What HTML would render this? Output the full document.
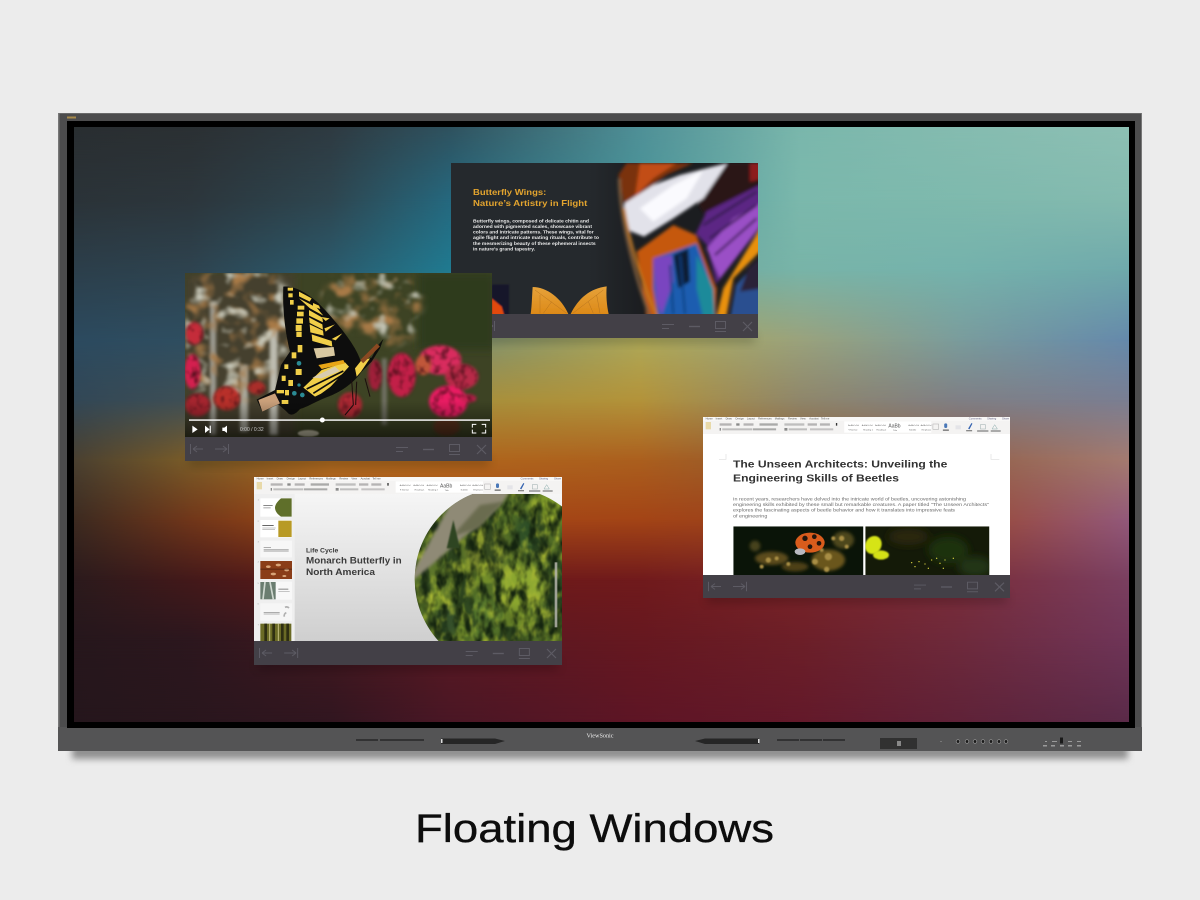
<!DOCTYPE html>
<html lang="en"><head><meta charset="utf-8"><title>Floating Windows</title>
<style>
html,body{margin:0;padding:0;background:#ececec;width:1200px;height:900px;overflow:hidden;position:relative}
svg.l{display:block;position:absolute;left:0;top:0}
text{font-family:"Liberation Sans",sans-serif}
.w{position:absolute;left:74px;top:127px;width:1055px;height:595px}
</style></head>
<body>
<svg class="l" xmlns="http://www.w3.org/2000/svg" width="1200" height="900" viewBox="0 0 1200 900">
<defs>
<filter id="sh0" x="-5%" y="-200%" width="110%" height="500%"><feGaussianBlur stdDeviation="3.500"/></filter>
</defs>
<rect width="1200" height="900" fill="#ececec"/>
<rect x="72" y="745" width="1056" height="14" fill="#8f8f8f" filter="url(#sh0)"/>
<rect x="58" y="113" width="1084" height="638" fill="#4c4c4d"/>
<rect x="58" y="113" width="1084" height="1" fill="#6a6a6a"/>
<rect x="58" y="113" width="1.500" height="638" fill="#777"/>
<rect x="1141" y="113" width="1" height="638" fill="#777"/>
<rect x="58" y="727" width="1084" height="24" fill="#545455"/>
<rect x="67" y="121" width="1068" height="607" fill="#000"/>
<rect x="67" y="116.500" width="9" height="2" fill="#a78a4a"/>
<path d="M356 740h22M380 740h22M402 740h22M777 740h22M800 740h22M823 740h22" stroke="#111" stroke-width="1"/>
<path d="M441 738.500h54l10 2.500-10 3h-54z" fill="#262626"/><rect x="441" y="739" width="1.500" height="4" fill="#ddd"/>
<path d="M759 738.500h-54l-10 2.500 10 3h54z" fill="#262626"/><rect x="758" y="739" width="1.500" height="4" fill="#ddd"/>
<text x="600" y="737.500" text-anchor="middle" font-size="6.500" fill="#eee" style="font-family:'Liberation Serif',serif" textLength="27" lengthAdjust="spacingAndGlyphs">ViewSonic</text>
<rect x="880" y="738" width="37" height="11" fill="#313131"/><rect x="897" y="741" width="4" height="5" fill="#888"/>
<g fill="#1a1a1a" stroke="#9a9a9a" stroke-width=".7"><circle cx="958" cy="741.500" r="1.800"/><circle cx="967" cy="741.500" r="1.800"/><circle cx="975" cy="741.500" r="1.800"/><circle cx="983" cy="741.500" r="1.800"/><circle cx="991" cy="741.500" r="1.800"/><circle cx="999" cy="741.500" r="1.800"/><circle cx="1006" cy="741.500" r="1.800"/></g>
<rect x="940" y="741" width="2" height="1" fill="#777"/>
<rect x="1060" y="737.500" width="3" height="6" fill="#1a1a1a"/>
<g fill="#9a9a9a"><rect x="1043" y="745" width="4" height="1.500"/><rect x="1051" y="745" width="4" height="1.500"/><rect x="1060" y="745" width="4" height="1.500"/><rect x="1068" y="745" width="4" height="1.500"/><rect x="1077" y="745" width="4" height="1.500"/><rect x="1068" y="741" width="4" height="1"/><rect x="1077" y="741" width="4" height="1"/><rect x="1045" y="741" width="2" height="1"/><rect x="1052" y="741" width="5" height="1"/></g>
<text x="415" y="842" font-size="40" fill="#0d0d0d" stroke="#0d0d0d" stroke-width=".35" textLength="359" lengthAdjust="spacingAndGlyphs">Floating Windows</text>
</svg>

<!-- wallpaper: bilinear colour grid -->
<div class="w" style="background:linear-gradient(to right,#292e31 0,#2b3033 116px,#2e3a41 256px,#2f525f 376px,#4f9097 566px,#7ab7ac 726px,#85bcb0 886px,#8dc0b4 1055px)"></div>
<div class="w" style="background:linear-gradient(to right,#2b3338 0,#2c363c 116px,#2e4650 256px,#25687e 376px,#4a9599 566px,#7bb8ac 726px,#7eb9ad 886px,#84baaf 1055px);-webkit-mask-image:linear-gradient(to bottom,transparent 0,#000 73px);mask-image:linear-gradient(to bottom,transparent 0,#000 73px)"></div>
<div class="w" style="background:linear-gradient(to right,#2c3f4b 0,#2e434f 116px,#2b5a6c 256px,#207a90 376px,#6aa39a 566px,#78b4a8 726px,#75b2ac 886px,#6fa9ab 1055px);-webkit-mask-image:linear-gradient(to bottom,transparent 73px,#000 143px);mask-image:linear-gradient(to bottom,transparent 73px,#000 143px)"></div>
<div class="w" style="background:linear-gradient(to right,#2c4a5f 0,#2f4e60 116px,#34607a 256px,#7a8d70 376px,#aea858 566px,#9aa27c 726px,#7a9c9c 886px,#6589ab 1055px);-webkit-mask-image:linear-gradient(to bottom,transparent 143px,#000 213px);mask-image:linear-gradient(to bottom,transparent 143px,#000 213px)"></div>
<div class="w" style="background:linear-gradient(to right,#324756 0,#3f4f55 116px,#6e6b40 256px,#a58f3c 376px,#b3933a 566px,#8f866a 726px,#7f7f85 886px,#7a7e92 1055px);-webkit-mask-image:linear-gradient(to bottom,transparent 213px,#000 273px);mask-image:linear-gradient(to bottom,transparent 213px,#000 273px)"></div>
<div class="w" style="background:linear-gradient(to right,#4a4030 0,#7a5c28 116px,#ae6c20 256px,#b0661c 376px,#ab5f1e 566px,#8f5a32 726px,#92604a 886px,#a47a70 1055px);-webkit-mask-image:linear-gradient(to bottom,transparent 273px,#000 333px);mask-image:linear-gradient(to bottom,transparent 273px,#000 333px)"></div>
<div class="w" style="background:linear-gradient(to right,#3c2a20 0,#70361a 116px,#a14a16 256px,#a54716 376px,#a34416 566px,#99421f 726px,#9b4a34 886px,#92587a 1055px);-webkit-mask-image:linear-gradient(to bottom,transparent 333px,#000 393px);mask-image:linear-gradient(to bottom,transparent 333px,#000 393px)"></div>
<div class="w" style="background:linear-gradient(to right,#2b1a1c 0,#43191a 116px,#611a18 256px,#6c1a18 376px,#701a1c 566px,#7a2428 726px,#7a2d3a 886px,#7a3f60 1055px);-webkit-mask-image:linear-gradient(to bottom,transparent 393px,#000 453px);mask-image:linear-gradient(to bottom,transparent 393px,#000 453px)"></div>
<div class="w" style="background:linear-gradient(to right,#26171c 0,#2c171e 116px,#41181f 256px,#581822 376px,#661820 566px,#6c1f28 726px,#6e2a3c 886px,#6f3558 1055px);-webkit-mask-image:linear-gradient(to bottom,transparent 453px,#000 513px);mask-image:linear-gradient(to bottom,transparent 453px,#000 513px)"></div>
<div class="w" style="background:linear-gradient(to right,#25161c 0,#29161d 116px,#311620 256px,#4a1725 376px,#5e1525 566px,#63192a 726px,#5f2238 886px,#5a2a48 1055px);-webkit-mask-image:linear-gradient(to bottom,transparent 513px,#000 595px);mask-image:linear-gradient(to bottom,transparent 513px,#000 595px)"></div>

<svg class="l" xmlns="http://www.w3.org/2000/svg" width="1200" height="900" viewBox="0 0 1200 900">
<defs>
<filter id="soft" x="-2%" y="-2%" width="104%" height="104%"><feGaussianBlur stdDeviation="1.100"/></filter>
<filter id="b1" x="-20%" y="-20%" width="140%" height="140%"><feGaussianBlur stdDeviation="2.500"/></filter>
<filter id="bw" x="-5%" y="-5%" width="110%" height="110%"><feGaussianBlur stdDeviation="5"/></filter>
<filter id="b2" x="-30%" y="-30%" width="160%" height="160%"><feGaussianBlur stdDeviation="5"/></filter>
<filter id="b3" x="-40%" y="-40%" width="180%" height="180%"><feGaussianBlur stdDeviation="12"/></filter>
<filter id="sh" x="-10%" y="-100%" width="120%" height="300%"><feGaussianBlur stdDeviation="5"/></filter>
<filter id="tex" x="-5%" y="-5%" width="110%" height="110%" color-interpolation-filters="sRGB">
 <feGaussianBlur in="SourceGraphic" stdDeviation="5" result="s"/>
 <feTurbulence type="fractalNoise" baseFrequency="0.04 0.035" numOctaves="2" seed="9"/>
 <feColorMatrix values="0 0 0 0 .25  0 0 0 0 .05  0 0 0 0 .08  2 0 0 0 -.9"/>
 <feGaussianBlur stdDeviation="2"/>
 <feComposite in2="s" operator="in" result="n"/>
 <feMerge><feMergeNode in="s"/><feMergeNode in="n"/></feMerge>
</filter>
<filter id="texL" x="-5%" y="-5%" width="110%" height="110%" color-interpolation-filters="sRGB">
 <feGaussianBlur in="SourceGraphic" stdDeviation="2" result="s"/>
 <feTurbulence type="fractalNoise" baseFrequency="0.035 0.022" numOctaves="3" seed="21"/>
 <feColorMatrix values="0 0 0 0 .66  0 0 0 0 .72  0 0 0 0 .2  2.500 0 0 0 -1.15"/>
 <feGaussianBlur stdDeviation="2"/>
 <feComposite in2="s" operator="in" result="n"/>
 <feTurbulence type="fractalNoise" baseFrequency="0.04 0.02" numOctaves="3" seed="5"/>
 <feColorMatrix values="0 0 0 0 .08  0 0 0 0 .14  0 0 0 0 .06  3 0 0 0 -1.25"/>
 <feGaussianBlur stdDeviation="2"/>
 <feComposite in2="s" operator="in" result="d"/>
 <feMerge><feMergeNode in="s"/><feMergeNode in="n"/><feMergeNode in="d"/></feMerge>
</filter>
<filter id="nBrown" x="0" y="0" width="100%" height="100%" color-interpolation-filters="sRGB">
 <feTurbulence type="fractalNoise" baseFrequency="0.018 0.02" numOctaves="2" seed="14"/>
 <feColorMatrix values="0 0 0 0 .66  0 0 0 0 .48  0 0 0 0 .28  4 0 0 0 -1.9"/>
 <feGaussianBlur stdDeviation="4"/>
</filter>
<filter id="nWhite" x="0" y="0" width="100%" height="100%" color-interpolation-filters="sRGB">
 <feTurbulence type="fractalNoise" baseFrequency="0.02 0.024" numOctaves="2" seed="33"/>
 <feColorMatrix values="0 0 0 0 .78  0 0 0 0 .78  0 0 0 0 .72  4 0 0 0 -2.15"/>
 <feGaussianBlur stdDeviation="4"/>
</filter>
<mask id="mBush" maskUnits="userSpaceOnUse" x="0" y="0" width="990" height="615">
 <g fill="#fff" filter="url(#b3)"><ellipse cx="190" cy="170" rx="175" ry="175"/><ellipse cx="160" cy="340" rx="110" ry="70"/><ellipse cx="590" cy="110" rx="150" ry="100"/><ellipse cx="650" cy="190" rx="70" ry="50"/></g>
</mask>
<linearGradient id="slide" x1="0" y1="0" x2="0" y2="1"><stop offset="0" stop-color="#fafafa"/><stop offset="1" stop-color="#cfcfcf"/></linearGradient>
<linearGradient id="vid" x1="0" y1="0" x2="0" y2="1"><stop offset="0.78" stop-color="#000" stop-opacity="0"/><stop offset="1" stop-color="#000" stop-opacity=".55"/></linearGradient>
<linearGradient id="dk" x1="0" y1="0" x2="1" y2="0"><stop offset="0" stop-color="#25292d"/><stop offset=".45" stop-color="#25292d"/><stop offset=".62" stop-color="#1b1d20"/></linearGradient>
<linearGradient id="leaf" x1="0" y1="0" x2="0" y2="1"><stop offset="0" stop-color="#e6a23a"/><stop offset="1" stop-color="#dd8a18"/></linearGradient>
<clipPath id="circ"><circle cx="784" cy="328" r="275"/></clipPath>

<symbol id="bar" viewBox="0 0 307 24" preserveAspectRatio="none">
<rect width="307" height="24" fill="#434047"/>
<g fill="none" stroke="#5d5b64" stroke-width="1">
<path d="M5.500 7v10M8 12h10M8 12l4-3M8 12l4 3"/>
<path d="M30 12h12M42 12l-4-3M42 12l-4 3M43.500 7v10"/>
<path d="M211 10.500h12M211 14.500h7"/>
<path d="M238 12.500h11" stroke-width="1.400"/>
<path d="M264.500 7.500h10v7h-10zM264 17.500h11"/>
<path d="M292 8l9 9M301 8l-9 9" stroke-width="1.200"/>
</g></symbol>

<symbol id="ribbon" viewBox="0 0 924 52" preserveAspectRatio="none">
<rect width="924" height="52" fill="#f4f3f2"/>
<rect y="0" width="924" height="13" fill="#f8f7f6"/>
<g font-size="8" fill="#555">
<text x="8" y="9">Home</text><text x="38" y="9">Insert</text><text x="68" y="9">Draw</text><text x="98" y="9">Design</text><text x="132" y="9">Layout</text><text x="166" y="9">References</text><text x="216" y="9">Mailings</text><text x="256" y="9">Review</text><text x="292" y="9">View</text><text x="320" y="9">Acrobat</text><text x="355" y="9">Tell me</text>
<text x="800" y="9" fill="#668">Comments</text><text x="855" y="9" fill="#668">Sharing</text><text x="900" y="9" fill="#668">Share</text>
</g>
<rect x="8" y="16" width="16" height="22" fill="#e8d9a8"/>
<g fill="#8a8a8a">
<rect x="50" y="20" width="36" height="7" opacity=".6"/><rect x="100" y="20" width="10" height="7"/><rect x="122" y="20" width="30" height="7" opacity=".6"/><rect x="170" y="20" width="55" height="7" opacity=".7"/><rect x="245" y="20" width="60" height="7" opacity=".5"/><rect x="315" y="20" width="28" height="7" opacity=".6"/><rect x="352" y="20" width="30" height="7" opacity=".6"/><rect x="400" y="19" width="4" height="8" fill="#333"/>
<rect x="50" y="34" width="4" height="8"/><rect x="58" y="35" width="90" height="6" opacity=".5"/><rect x="150" y="35" width="70" height="6" opacity=".7"/><rect x="245" y="34" width="9" height="8"/><rect x="258" y="35" width="55" height="6" opacity=".5"/><rect x="322" y="35" width="70" height="6" opacity=".45"/>
</g>
<rect x="425" y="14" width="262" height="34" fill="#fff"/>
<g font-size="6.500" fill="#666"><text x="437" y="28">AaBbCcDd</text><text x="478" y="28">AaBbCcDd</text><text x="518" y="28">AaBbCcDd</text><text x="618" y="28">AaBbCcDd</text><text x="655" y="28">AaBbCcDd</text>
<text x="438" y="42">¶ Normal</text><text x="482" y="42">Heading 1</text><text x="522" y="42">Heading 2</text><text x="620" y="42">Subtitle</text><text x="658" y="42">Emphasis</text></g>
<text x="558" y="33" font-size="15" fill="#555">AaBb</text><text x="572" y="43" font-size="6.500" fill="#666">Title</text>
<rect x="692" y="22" width="17" height="16" fill="none" stroke="#aaa" stroke-width="1.500"/>
<rect x="726" y="20" width="9" height="14" rx="4" fill="#4a78b8"/><rect x="722" y="38" width="18" height="5" fill="#888"/>
<rect x="760" y="26" width="16" height="12" fill="#e4e4e8"/>
<path d="M798 36l10-17 3 2-9 17z" fill="#3563b0"/><rect x="792" y="40" width="18" height="4" fill="#888"/>
<rect x="835" y="24" width="15" height="13" fill="none" stroke="#9aa" stroke-width="1.500"/><rect x="825" y="40" width="34" height="6" fill="#aaa"/>
<path d="M878 24l8 13h-16z" fill="none" stroke="#8aa" stroke-width="1.500"/><rect x="866" y="40" width="30" height="6" fill="#aaa"/>
</symbol>
</defs>

<!-- window 1: butterfly wings slide -->
<rect x="455" y="334" width="300" height="8" fill="#000" opacity=".25" filter="url(#sh)"/>
<svg x="451" y="163" width="307" height="151" viewBox="33 24 921 453">
<rect x="33" y="24" width="921" height="453" fill="url(#dk)"/>
<g filter="url(#bw)">
<polygon points="535,60 560,24 760,24 680,60 600,120 553,150" fill="#7a3210"/>
<polygon points="600,24 710,24 640,70 585,125" fill="#c24d12"/>
<polygon points="860,24 970,24 970,110 800,190 765,130" fill="#2a1215"/>
<polygon points="930,24 970,24 970,70 930,80" fill="#8d1a1a"/>
<polygon points="768,235 800,170 970,85 970,205 830,385 800,270" fill="#5c2684"/>
<polygon points="800,280 880,190 970,140 970,200 840,370" fill="#9a50c6"/>
<path d="M790 210L950 110M810 250L950 150M825 300L950 190" stroke="#2a1240" stroke-width="6" fill="none"/>
<polygon points="553,145 640,90 720,60 862,24 790,130 700,190 612,245 570,228 550,180" fill="#e2e2ea"/>
<polygon points="600,160 700,90 790,45 740,130 640,200" fill="#fafafe"/>
<polygon points="590,290 700,210 768,240 785,290 830,400 826,490 620,490 608,400" fill="#c5590f"/>
<polygon points="640,310 700,290 770,265 815,390 825,490 655,490 640,400" fill="#1c5db0"/>
<polygon points="640,310 695,300 700,380 665,480 650,440" fill="#7a44c0"/>
<polygon points="700,300 745,280 750,380 715,400" fill="#101a30"/>
<polygon points="770,300 820,400 825,490 790,490 770,400" fill="#1b8a9a"/>
<path d="M720 300L735 477M690 330L700 477" stroke="#0f3f80" stroke-width="6" fill="none"/>
<polygon points="970,205 970,280 880,370 858,490 828,490 850,400" fill="#e89010"/>
<polygon points="970,300 970,490 870,490 888,390" fill="#2a4f90"/>
<polygon points="925,340 970,300 970,400 900,410" fill="#2b2038"/>
<path d="M538 70C540 200 590 380 632 490" fill="none" stroke="#7a5a3a" stroke-width="9"/>
<path d="M552 160C570 270 610 400 655 490" fill="none" stroke="#c27a24" stroke-width="7"/>
<path d="M770 240L830 400" stroke="#3a2418" stroke-width="6" fill="none"/>
</g>
<g filter="url(#b1)">
<rect x="155" y="388" width="52" height="100" fill="#17132a"/>
<polygon points="155,430 185,455 195,490 155,490" fill="#e2480c"/>
</g>
<g filter="url(#soft)">
<path d="M278 396C320 396 365 430 385 477H272C276 450 276 420 278 396z" fill="url(#leaf)"/>
<path d="M500 394C450 400 415 430 392 477H506C500 450 498 420 500 394z" fill="url(#leaf)"/>
<path d="M285 405L380 475M300 420L300 475M335 440L310 475M490 405L398 475M470 420L480 475M445 440L460 475" stroke="#b8741f" stroke-width="1.500" fill="none"/>
<g font-weight="700" fill="#e3a42f" font-size="26">
<text x="99" y="120" textLength="220" lengthAdjust="spacingAndGlyphs">Butterfly Wings:</text>
<text x="99" y="153" textLength="343" lengthAdjust="spacingAndGlyphs">Nature’s Artistry in Flight</text>
</g>
<g font-weight="700" fill="#ececec" font-size="13.500">
<text x="99" y="202" textLength="348" lengthAdjust="spacingAndGlyphs">Butterfly wings, composed of delicate chitin and</text>
<text x="99" y="219" textLength="357" lengthAdjust="spacingAndGlyphs">adorned with pigmented scales, showcase vibrant</text>
<text x="99" y="235" textLength="362" lengthAdjust="spacingAndGlyphs">colors and intricate patterns. These wings, vital for</text>
<text x="99" y="252" textLength="378" lengthAdjust="spacingAndGlyphs">agile flight and intricate mating rituals, contribute to</text>
<text x="99" y="270" textLength="368" lengthAdjust="spacingAndGlyphs">the mesmerizing beauty of these ephemeral insects</text>
<text x="99" y="287" textLength="186" lengthAdjust="spacingAndGlyphs">in nature’s grand tapestry.</text>
</g>
</g>
</svg>
<use href="#bar" x="451" y="314" width="307" height="24"/>

<!-- window 2: video -->
<rect x="189" y="457" width="300" height="8" fill="#000" opacity=".25" filter="url(#sh)"/>
<svg x="185" y="273" width="307" height="164" viewBox="30 24 921 492">
<rect x="30" y="24" width="921" height="492" fill="#3d4324"/>
<rect x="730" y="24" width="230" height="230" fill="#2f3a1f" filter="url(#b3)"/>
<rect x="30" y="24" width="330" height="492" fill="#45402f" filter="url(#b3)"/>
<g filter="url(#b2)">
<rect x="105" y="110" width="18" height="400" fill="#9b9a90"/>
<rect x="195" y="300" width="24" height="200" fill="#a9a89c"/>
<rect x="284" y="190" width="24" height="320" fill="#bdbcb0"/>
<rect x="620" y="280" width="16" height="200" fill="#6f7062"/>
</g>
<g mask="url(#mBush)">
<rect x="30" y="24" width="760" height="460" filter="url(#nBrown)"/>
<rect x="30" y="24" width="760" height="460" filter="url(#nWhite)"/>
</g>
<ellipse cx="400" cy="505" rx="32" ry="10" fill="#c9c4aa" filter="url(#b1)"/>
<g filter="url(#tex)">
<ellipse cx="58" cy="205" rx="26" ry="34" fill="#c42c3a"/><ellipse cx="52" cy="320" rx="24" ry="52" fill="#d3204f"/><ellipse cx="68" cy="420" rx="38" ry="34" fill="#a5252f"/>
<ellipse cx="155" cy="400" rx="40" ry="36" fill="#b8302a"/><ellipse cx="245" cy="368" rx="26" ry="20" fill="#a92e2a"/>
<ellipse cx="525" cy="420" rx="36" ry="38" fill="#b22a35"/><ellipse cx="600" cy="330" rx="20" ry="46" fill="#9f203a"/>
<ellipse cx="680" cy="330" rx="42" ry="66" fill="#c22048"/><ellipse cx="795" cy="285" rx="64" ry="44" fill="#d82c5e"/><ellipse cx="860" cy="335" rx="50" ry="38" fill="#b82a48"/><ellipse cx="745" cy="300" rx="24" ry="30" fill="#c0573a"/><ellipse cx="820" cy="410" rx="58" ry="48" fill="#e81c62"/><ellipse cx="880" cy="400" rx="24" ry="12" fill="#c62050"/>
</g>
<ellipse cx="815" cy="485" rx="40" ry="28" fill="#5c331b" filter="url(#b2)"/>
<!-- butterfly -->
<g filter="url(#soft)">
<path d="M325 65C360 60 410 90 450 135C500 190 540 240 556 285L560 285L590 278L610 240L625 222L615 250L590 290L560 320C540 350 500 380 460 395C420 410 400 425 375 432C360 450 345 455 335 440L310 418L262 440L245 404L300 375L318 300L345 260C330 200 322 130 325 65z" fill="#0c0c08"/>
<polygon points="250,405 300,385 315,415 262,440" fill="#caa07a"/>
<g fill="#f1cf4a">
<polygon points="372,80 410,100 404,110 372,94"/><polygon points="372,100 425,128 445,152 405,130"/><polygon points="402,135 442,158 444,172 402,152"/><polygon points="402,157 442,178 444,194 404,174"/><polygon points="404,178 444,197 446,212 406,202"/><polygon points="448,190 480,178 452,200"/><polygon points="470,222 502,205 482,226"/><polygon points="410,208 470,228 472,245 412,228"/>
<polygon points="414,114 432,122 436,132 414,124"/><polygon points="440,156 464,160 452,168"/>
<rect x="338" y="68" width="16" height="9"/><rect x="340" y="85" width="13" height="12"/><rect x="345" y="105" width="11" height="14"/><rect x="368" y="122" width="20" height="12"/><rect x="366" y="140" width="20" height="14"/><rect x="364" y="160" width="20" height="16"/><rect x="362" y="180" width="18" height="18"/><rect x="364" y="200" width="16" height="16"/><rect x="368" y="240" width="14" height="22"/><rect x="350" y="262" width="14" height="18"/>
<polygon points="385,368 440,315 510,292 522,305 455,378 420,395"/>
<rect x="320" y="332" width="12" height="16"/><rect x="340" y="345" width="14" height="18"/><rect x="362" y="312" width="18" height="18"/><rect x="328" y="298" width="12" height="14"/><rect x="305" y="375" width="22" height="10"/><rect x="330" y="375" width="12" height="16"/><rect x="320" y="405" width="20" height="12"/>
<polygon points="540,310 560,285 585,280 558,320 545,335"/>
</g>
<polygon points="416,250 476,246 480,272 425,280" fill="#d8c8a0"/>
<polygon points="412,338 480,305 495,318 440,340" fill="#d8ccb0"/>
<polygon points="430,300 505,285 510,295 440,312" fill="#e8a516"/>
<path d="M395 372L505 318M415 385L510 325M440 388L512 335" stroke="#0c0c08" stroke-width="5" fill="none"/>
<g fill="#2c8a94"><circle cx="372" cy="295" r="7"/><circle cx="358" cy="385" r="7"/><circle cx="382" cy="390" r="7"/><circle cx="372" cy="360" r="5"/></g>
<path d="M530 345L535 420L510 450M545 350L542 420M570 340L585 395" stroke="#1b0d0d" stroke-width="3" fill="none"/>
<path d="M560 290L610 240" stroke="#8a4a20" stroke-width="13" fill="none"/>
</g>
<rect x="30" y="24" width="921" height="492" fill="url(#vid)"/>
<rect x="42" y="463" width="903" height="4.500" fill="#f4f4f4"/>
<circle cx="442" cy="465" r="7.500" fill="#fff"/>
<g fill="#fff">
<polygon points="52,482 68,493 52,504"/>
<polygon points="90,482 104,493 90,504"/><rect x="104" y="482" width="3.500" height="22"/>
<polygon points="142,488 148,488 156,482 156,504 148,498 142,498"/>
</g>
<text x="195" y="498" font-size="15" fill="#c8c8c8">0:00 / 0:32</text>
<path d="M892 488v-10h12M920 478h12v10M932 494v10h-12M904 504h-12v-10" fill="none" stroke="#fff" stroke-width="3"/>
</svg>
<use href="#bar" x="185" y="437" width="307" height="24"/>

<!-- window 3: slides -->
<rect x="258" y="661" width="300" height="8" fill="#000" opacity=".25" filter="url(#sh)"/>
<svg x="254" y="477" width="308" height="164" viewBox="27 21 924 492">
<rect x="27" y="21" width="924" height="492" fill="url(#slide)"/>
<g clip-path="url(#circ)">
<g filter="url(#texL)">
<rect x="490" y="40" width="480" height="490" fill="#4f6a26"/>
<g filter="url(#b3)">
<ellipse cx="560" cy="340" rx="50" ry="60" fill="#5d762c"/><ellipse cx="720" cy="240" rx="60" ry="70" fill="#6f7e2c"/><ellipse cx="910" cy="120" rx="55" ry="50" fill="#84a02c"/><ellipse cx="935" cy="360" rx="35" ry="110" fill="#2c4620"/><ellipse cx="830" cy="350" rx="75" ry="70" fill="#8fa930"/><ellipse cx="700" cy="440" rx="70" ry="55" fill="#587a2d"/><ellipse cx="850" cy="190" rx="40" ry="60" fill="#2f4f26"/><ellipse cx="610" cy="450" rx="36" ry="50" fill="#34502a"/>
</g>
<g fill="#24381a" opacity=".75" filter="url(#b1)">
<polygon points="625,150 650,300 600,300"/><polygon points="740,90 775,280 705,280"/><polygon points="885,80 915,270 855,270"/><polygon points="540,230 562,380 518,380"/><polygon points="660,290 695,470 625,470"/><polygon points="925,260 950,450 900,450"/><polygon points="590,370 615,510 565,510"/><polygon points="790,410 825,520 755,520"/><polygon points="680,120 700,240 660,240"/>
</g>
<g fill="#8aa52e" opacity=".6" filter="url(#b1)">
<polygon points="815,270 865,470 765,470"/><polygon points="580,280 602,420 558,420"/><polygon points="715,230 740,340 690,340"/><polygon points="920,90 942,190 898,190"/><polygon points="655,400 680,500 630,500"/>
</g>
</g>
<polygon points="480,350 620,95 700,40 810,40 775,95 705,160 640,215 560,285" fill="#8f8a76" filter="url(#b2)"/>
<polygon points="620,200 705,105 775,95 700,175" fill="#6a6c50" filter="url(#b2)"/>
<polygon points="625,150 645,235 605,235" fill="#2f4420" filter="url(#b1)"/>
</g>
<use href="#ribbon" x="27" y="20" width="924" height="52"/>
<rect x="27" y="72" width="122" height="441" fill="#efefef"/>
<rect x="46" y="85" width="95" height="55" fill="#fff"/><path d="M140 85H108C96 95 90 105 90 113C90 122 96 132 108 140H140z" fill="#5f6f2a"/><rect x="55" y="105" width="28" height="3" fill="#888"/><rect x="55" y="112" width="22" height="3" fill="#aaa"/>
<rect x="46" y="150" width="95" height="52" fill="#fff"/><rect x="100" y="152" width="40" height="49" fill="#b89a25"/><rect x="52" y="165" width="34" height="3" fill="#666"/><rect x="52" y="173" width="40" height="2" fill="#aaa"/><rect x="52" y="178" width="38" height="2" fill="#aaa"/>
<rect x="46" y="212" width="95" height="50" fill="#f7f7f7"/><rect x="56" y="231" width="22" height="2" fill="#888"/><rect x="56" y="237" width="75" height="2" fill="#999"/><rect x="56" y="242" width="75" height="2" fill="#777"/>
<rect x="46" y="273" width="95" height="54" fill="#8a3d18"/><g fill="#d8a478"><ellipse cx="70" cy="290" rx="7" ry="4"/><ellipse cx="100" cy="285" rx="8" ry="4"/><ellipse cx="125" cy="300" rx="7" ry="4"/><ellipse cx="85" cy="312" rx="8" ry="4"/><ellipse cx="118" cy="318" rx="6" ry="3"/></g><rect x="46" y="296" width="95" height="3" fill="#3a1a10" opacity=".6"/>
<rect x="46" y="335" width="95" height="54" fill="#f8f8f8"/><rect x="46" y="336" width="46" height="52" fill="#6a7d70"/><path d="M60 336l-6 52M75 336l10 52" stroke="#cfd8d0" stroke-width="5" fill="none"/><rect x="100" y="356" width="30" height="3" fill="#888"/><rect x="100" y="363" width="34" height="2" fill="#aaa"/>
<rect x="46" y="400" width="95" height="52" fill="#f6f6f6"/><path d="M120 412a10 10 0 0 1 12 2M118 440a10 10 0 0 1 6-12" stroke="#b0b0b0" stroke-width="5" fill="none"/><rect x="56" y="426" width="48" height="2" fill="#888"/><rect x="56" y="431" width="48" height="2" fill="#999"/>
<rect x="46" y="461" width="93" height="52" fill="#6a6a25"/><path d="M62 461v52M86 461v52M112 461v52M128 461v52" stroke="#2f2f12" stroke-width="8" fill="none"/><path d="M74 461v52M100 461v52" stroke="#c2bd80" stroke-width="3" fill="none"/>
<g font-size="6" fill="#888"><text x="38" y="92">1</text><text x="38" y="156">2</text><text x="38" y="218">3</text><text x="38" y="278">4</text><text x="38" y="342">5</text><text x="38" y="404">6</text><text x="38" y="466">7</text></g>
<g filter="url(#soft)">
<text x="183" y="248" font-size="18" font-weight="700" fill="#3a3a3a" textLength="97" lengthAdjust="spacingAndGlyphs">Life Cycle</text>
<text x="183" y="281" font-size="27" font-weight="700" fill="#3a3a3a" textLength="287" lengthAdjust="spacingAndGlyphs">Monarch Butterfly in</text>
<text x="183" y="315" font-size="27" font-weight="700" fill="#3a3a3a" textLength="207" lengthAdjust="spacingAndGlyphs">North America</text>
</g>
<rect x="929" y="277" width="8" height="195" fill="#b4b4ac" opacity=".85"/>
</svg>
<use href="#bar" x="254" y="641" width="308" height="24"/>

<!-- window 4: document -->
<rect x="707" y="594" width="300" height="8" fill="#000" opacity=".25" filter="url(#sh)"/>
<svg x="703" y="417" width="307" height="158" viewBox="24 21 921 474">
<rect x="24" y="21" width="921" height="474" fill="#fff"/>
<use href="#ribbon" x="24" y="20" width="921" height="52"/>
<path d="M93 132v16H72M888 132v16h25" fill="none" stroke="#ddd" stroke-width="2"/>
<g filter="url(#soft)">
<g font-weight="700" fill="#333" font-size="31">
<text x="114" y="172" textLength="643" lengthAdjust="spacingAndGlyphs">The Unseen Architects: Unveiling the</text>
<text x="114" y="214" textLength="498" lengthAdjust="spacingAndGlyphs">Engineering Skills of Beetles</text>
</g>
<g fill="#6a6a6a" font-size="14">
<text x="114" y="271" textLength="699" lengthAdjust="spacingAndGlyphs">In recent years, researchers have delved into the intricate world of beetles, uncovering astonishing</text>
<text x="114" y="288" textLength="768" lengthAdjust="spacingAndGlyphs">engineering skills exhibited by these small but remarkable creatures. A paper titled "The Unseen Architects"</text>
<text x="114" y="305" textLength="666" lengthAdjust="spacingAndGlyphs">explores the fascinating aspects of beetle behavior and how it translates into impressive feats</text>
<text x="114" y="322" textLength="103" lengthAdjust="spacingAndGlyphs">of engineering</text>
</g>
</g>
<svg x="115" y="349" width="390" height="146" viewBox="115 349 390 146">
<rect x="115" y="349" width="390" height="146" fill="#0a1408"/>
<g filter="url(#b2)">
<ellipse cx="230" cy="445" rx="50" ry="20" fill="#5c4c1a"/><ellipse cx="400" cy="450" rx="50" ry="32" fill="#6a561f"/><ellipse cx="445" cy="390" rx="32" ry="26" fill="#4e461a"/><ellipse cx="180" cy="408" rx="16" ry="16" fill="#47431a"/><ellipse cx="300" cy="470" rx="40" ry="14" fill="#4e4016"/>
</g>
<g fill="#a88e44" filter="url(#b1)"><circle cx="220" cy="450" r="8"/><circle cx="400" cy="440" r="11"/><circle cx="360" cy="455" r="9"/><circle cx="440" cy="385" r="8"/><circle cx="415" cy="385" r="6"/><circle cx="395" cy="478" r="8"/><circle cx="280" cy="462" r="6"/><circle cx="245" cy="445" r="6"/><circle cx="455" cy="410" r="6"/><circle cx="380" cy="420" r="6"/><circle cx="200" cy="470" r="6"/></g>
<g filter="url(#soft)">
<ellipse cx="345" cy="398" rx="44" ry="30" fill="#d95b1e"/>
<g fill="#20120c"><circle cx="330" cy="385" r="8"/><circle cx="358" cy="380" r="7"/><circle cx="372" cy="400" r="7"/><circle cx="345" cy="410" r="7"/></g>
<ellipse cx="315" cy="425" rx="16" ry="10" fill="#b8b8c0"/>
</g>
</svg>
<svg x="511" y="349" width="372" height="146" viewBox="511 349 372 146">
<rect x="511" y="349" width="372" height="146" fill="#141a08"/>
<g filter="url(#b3)"><ellipse cx="760" cy="420" rx="60" ry="40" fill="#1f3010"/><ellipse cx="640" cy="380" rx="60" ry="25" fill="#2c2810"/><ellipse cx="840" cy="470" rx="50" ry="30" fill="#243414"/></g>
<ellipse cx="535" cy="405" rx="24" ry="28" fill="#d6e418" transform="rotate(30 535 405)" filter="url(#b1)"/>
<ellipse cx="558" cy="435" rx="24" ry="14" fill="#d4e014" filter="url(#b1)"/>
<g fill="#d6d040"><circle cx="650" cy="458" r="2"/><circle cx="672" cy="455" r="2"/><circle cx="690" cy="462" r="2"/><circle cx="710" cy="450" r="2"/><circle cx="725" cy="445" r="2"/><circle cx="735" cy="460" r="2"/><circle cx="750" cy="450" r="2"/><circle cx="775" cy="445" r="2"/><circle cx="700" cy="475" r="2"/><circle cx="660" cy="470" r="2"/><circle cx="745" cy="475" r="2"/></g>
</svg>
</svg>
<use href="#bar" x="703" y="575" width="307" height="23"/>
</svg>
</body></html>
